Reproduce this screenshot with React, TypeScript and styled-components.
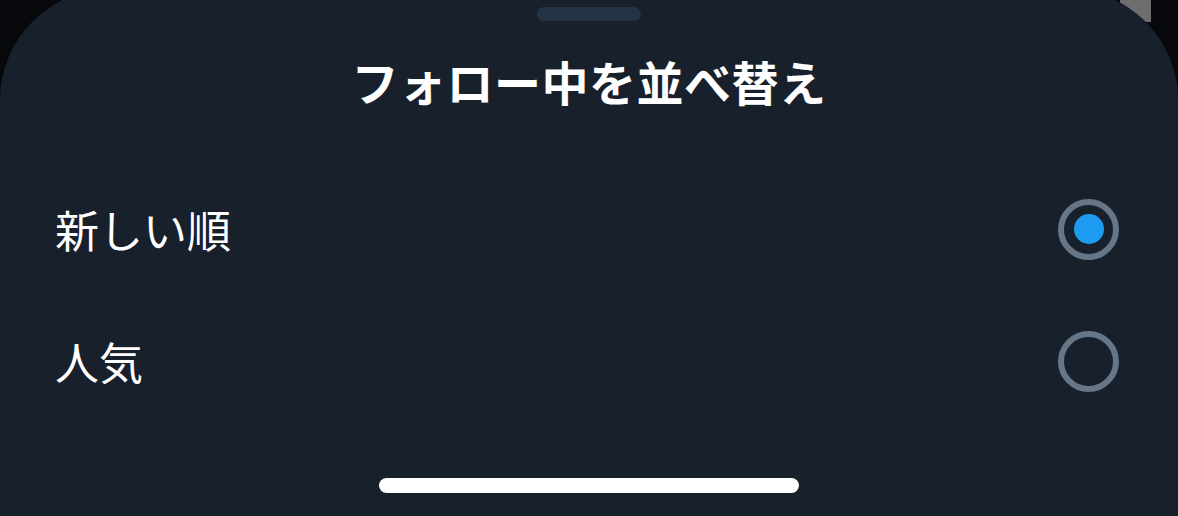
import styled, { createGlobalStyle } from "styled-components";

const GlobalStyle = createGlobalStyle`
  html, body {
    margin: 0;
    padding: 0;
    background: #06080b;
  }
  * {
    box-sizing: border-box;
  }
`;

const Screen = styled.div`
  width: 1178px;
  height: 516px;
  overflow: hidden;
  background: linear-gradient(#6e6e6e, #6e6e6e) 1120px 0 / 31px 22px no-repeat,
    #06080b;
  font-family: "Noto Sans CJK JP", "Noto Sans", sans-serif;
  color: #ffffff;
`;

const Sheet = styled.div`
  display: flex;
  flex-direction: column;
  align-items: center;
  margin-top: -11px;
  height: 527px;
  border-radius: 111px 111px 0 0;
  background: #17202b;
  padding-bottom: 23px;
`;

const Grabber = styled.div`
  margin-top: 18px;
  width: 104px;
  height: 14px;
  border-radius: 7px;
  background: #243345;
`;

const Title = styled.h1`
  margin: 30px 0 0;
  height: 60px;
  line-height: 60px;
  font-size: 47px;
  font-weight: 700;
  letter-spacing: 0.5px;
`;

const Options = styled.ul`
  list-style: none;
  margin: 52px 0 0;
  padding: 0 59px 0 55px;
  width: 100%;
`;

const Option = styled.li`
  display: flex;
  align-items: center;
  justify-content: space-between;
  height: 132px;
  font-size: 44px;
  font-weight: 400;
  cursor: pointer;
`;

const Radio = styled.span<{ $checked?: boolean }>`
  display: flex;
  align-items: center;
  justify-content: center;
  width: 61px;
  height: 61px;
  border-radius: 50%;
  border: 6.5px solid #667687;

  &::after {
    content: "";
    display: ${(props) => (props.$checked ? "block" : "none")};
    width: 30px;
    height: 30px;
    border-radius: 50%;
    background: #1d9bf0;
  }
`;

const HomeBar = styled.div`
  margin-top: auto;
  width: 420px;
  height: 15px;
  border-radius: 8px;
  background: #ffffff;
`;

const options = [
  { id: "recent", label: "新しい順", checked: true },
  { id: "popular", label: "人気", checked: false },
];

function App() {
  return (
    <>
      <GlobalStyle />
      <Screen>
        <Sheet>
          <Grabber />
          <Title>フォロー中を並べ替え</Title>
          <Options>
            {options.map((option) => (
              <Option key={option.id}>
                <span>{option.label}</span>
                <Radio $checked={option.checked} />
              </Option>
            ))}
          </Options>
          <HomeBar />
        </Sheet>
      </Screen>
    </>
  );
}

export default App;
